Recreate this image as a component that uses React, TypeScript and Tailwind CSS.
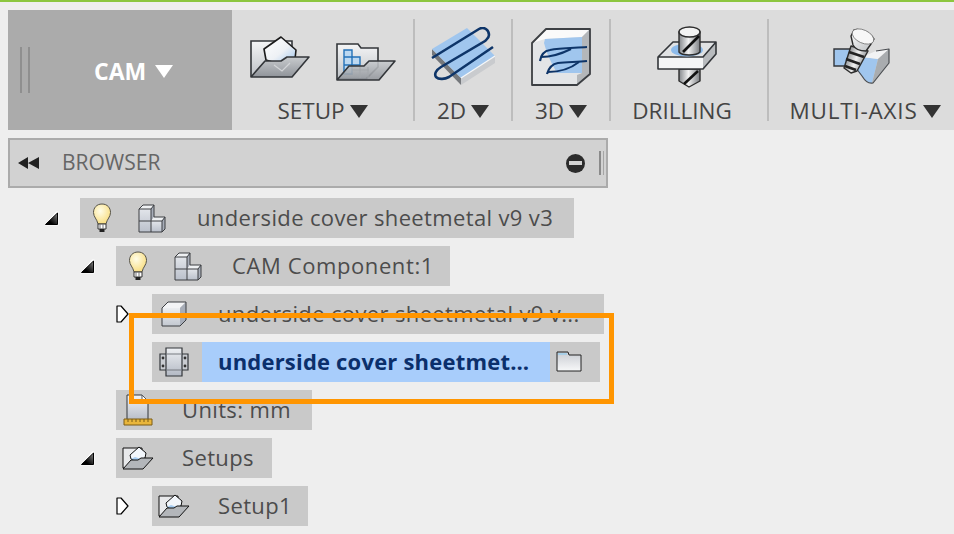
import React from 'react';

const font = { fontFamily: '"Open Sans", "Noto Sans", sans-serif' };

const Caret = ({ className = 'fill-[#333]' }: { className?: string }) => (
  <svg width="18" height="13" viewBox="0 0 18 13" className={className}>
    <path d="M0 0H18L9 13Z" />
  </svg>
);

const SetupIcon = () => (
  <svg width="60" height="43" viewBox="0 0 60 43">
    <defs>
      <linearGradient id="sf" x1="0" y1="0" x2="0" y2="1">
        <stop offset="0" stopColor="#f4f5f6" />
        <stop offset="1" stopColor="#bfc3c8" />
      </linearGradient>
      <linearGradient id="sb" x1="0" y1="0" x2="1" y2="1">
        <stop offset="0" stopColor="#ffffff" />
        <stop offset="0.55" stopColor="#eef1f5" />
        <stop offset="1" stopColor="#9cc4ee" />
      </linearGradient>
      <linearGradient id="sl" x1="0" y1="0" x2="0" y2="1">
        <stop offset="0" stopColor="#c8cbce" />
        <stop offset="1" stopColor="#90949a" />
      </linearGradient>
    </defs>
    <path d="M1 5H42V22L30 40H1Z" fill="url(#sf)" stroke="#33363a" strokeWidth="1.6" />
    <path d="M14 13L31 1L46 14L45 23L29 28L16 24Z" fill="url(#sb)" stroke="#1c1c1c" strokeWidth="1.6" strokeLinejoin="round" />
    <path d="M1 41L15 25H31L37 21H59L42 41Z" fill="url(#sl)" stroke="#33363a" strokeWidth="1.6" strokeLinejoin="round" />
    <path d="M24 29L32 35L40 27" fill="none" stroke="#d2d4d7" strokeWidth="1.2" />
  </svg>
);

const SetupGridIcon = () => (
  <svg width="60" height="38" viewBox="0 0 60 38">
    <path d="M1 1H22L25 5H42V24L30 36H1Z" fill="url(#sf)" stroke="#33363a" strokeWidth="1.6" />
    <path d="M8 7H16V14H24V22H16V31H8Z" fill="#bcd8f1" stroke="#2472b8" strokeWidth="1.4" />
    <path d="M8 14H16V22M8 22H16" fill="none" stroke="#2472b8" strokeWidth="1.4" />
    <path d="M1 37L13 23H28L33 18H59L43 37Z" fill="url(#sl)" fillOpacity="0.88" stroke="#33363a" strokeWidth="1.6" strokeLinejoin="round" />
    <path d="M16 27H33M24 24V35M32 24V35" stroke="#a3a7ab" strokeWidth="1" />
  </svg>
);

const TwoDIcon = () => (
  <svg width="64" height="60" viewBox="7 7 64 60">
    <path d="M8 29L37 58V65L8 35Z" fill="#75787c" />
    <path d="M37 58L71 36V43L37 65Z" fill="#c9cbce" />
    <path d="M8 29L43 8L71 36L37 58Z" fill="#a0c6ee" />
    <path d="M37 58L71 36" stroke="#f6f7f8" strokeWidth="1.2" />
    <path d="M8 38L55 9C60 6 65 10 65 15C65 18 63 19 61 21L17 47C12 50 10 54 12 57C15 60 21 59 25 57L69 27" fill="none" stroke="#0e3569" strokeWidth="2.6" />
  </svg>
);

const ThreeDIcon = () => (
  <svg width="62" height="60" viewBox="106 6 62 60">
    <path d="M108 22L122 8H166V53L153 64H108Z" fill="#e3e5e7" />
    <path d="M122 8H166L158 16L121 18L108 22Z" fill="#fafafa" />
    <path d="M158 16L166 8V53L153 64V54L158 52Z" fill="#b4b7ba" />
    <path d="M121 18L158 16V52H133L128 43L123 32L120 22Z" fill="#a0c6ee" />
    <path d="M108 22L122 8H166V53L153 64H108Z" fill="none" stroke="#3c3f43" strokeWidth="1.8" strokeLinejoin="round" />
    <path d="M116 40C117 33 120 30 126 29C136 27 150 27 163 26" fill="none" stroke="#0e3569" strokeWidth="2.2" />
    <path d="M117 36C126 36 137 33 147 28" fill="none" stroke="#0e3569" strokeWidth="2" />
    <path d="M123 53C125 46 128 43 134 42C144 41 154 41 163 40" fill="none" stroke="#0e3569" strokeWidth="2.2" />
    <path d="M124 51C134 51 146 48 155 41" fill="none" stroke="#0e3569" strokeWidth="2" />
  </svg>
);

const DrillIcon = () => (
  <svg width="62" height="64" viewBox="8 6 62 64">
    <defs>
      <linearGradient id="dr" x1="0" y1="0" x2="1" y2="0">
        <stop offset="0" stopColor="#85888c" />
        <stop offset="0.45" stopColor="#f2f2f2" />
        <stop offset="1" stopColor="#7b7e82" />
      </linearGradient>
    </defs>
    <path d="M31 50H52V62L41 68L31 62Z" fill="url(#dr)" stroke="#2c2c2c" strokeWidth="1.4" strokeLinejoin="round" />
    <path d="M36 65L50 52" stroke="#111" strokeWidth="2.6" />
    <path d="M10 38L25 23H68L55 38Z" fill="#e0e2e4" />
    <path d="M10 38H55V50H10Z" fill="#f4f5f6" />
    <path d="M55 38L68 23V35L55 50Z" fill="#b8bbbe" />
    <path d="M10 38L25 23H68V35L55 50H10Z M10 38H55L68 23" fill="none" stroke="#33363a" strokeWidth="1.6" strokeLinejoin="round" />
    <ellipse cx="39" cy="31" rx="16" ry="6.5" fill="#8dbbeb" />
    <path d="M31 13V33C34 37 48 37 52 33V13Z" fill="url(#dr)" stroke="#2c2c2c" strokeWidth="1.4" />
    <ellipse cx="41.5" cy="13" rx="10.5" ry="5" fill="#f3f3f3" stroke="#2c2c2c" strokeWidth="1.4" />
    <path d="M35 33L51 17" stroke="#111" strokeWidth="2.6" />
  </svg>
);

const MultiAxisIcon = () => (
  <svg width="60" height="58" viewBox="6 7 60 58">
    <defs>
      <linearGradient id="mx" x1="0" y1="0.3" x2="1" y2="0.7">
        <stop offset="0" stopColor="#707377" />
        <stop offset="0.5" stopColor="#f0f0f0" />
        <stop offset="1" stopColor="#6b6e72" />
      </linearGradient>
      <linearGradient id="mh" x1="0" y1="0" x2="1" y2="1">
        <stop offset="0" stopColor="#ffffff" />
        <stop offset="1" stopColor="#b9bcbf" />
      </linearGradient>
    </defs>
    <path d="M8 28H26L22 45H8Z" fill="#a0c6ee" stroke="#33363a" strokeWidth="1.4" />
    <path d="M36 36L52 38L46 62C40 62 35 54 30 48Z" fill="#a0c6ee" />
    <path d="M36 36L50 30L63 28L52 38Z" fill="#f2f3f4" />
    <path d="M52 38L63 28V42L47 62H46Z" fill="#a9acaf" />
    <path d="M50 30L63 28V42L47 62C43 63 39 60 36 55L30 47" fill="none" stroke="#4a4d51" strokeWidth="1.2" strokeLinejoin="round" />
    <path d="M25 25L42 30L31 50L25 52L18 47Z" fill="url(#mx)" stroke="#2c2c2c" strokeWidth="1.4" strokeLinejoin="round" />
    <path d="M23 31L38 36M20 38L34 43M19 45L30 49" stroke="#222" strokeWidth="2.6" />
    <path d="M25 15L28 9C33 7 44 11 48 18L45 23L40 30C34 30 29 28 27 24Z" fill="url(#mh)" stroke="#2c2c2c" strokeWidth="1.4" strokeLinejoin="round" />
    <ellipse cx="37" cy="15.5" rx="11.5" ry="6.5" transform="rotate(25 37 15.5)" fill="#f7f7f7" stroke="#777" strokeWidth="0.8" />
  </svg>
);

const Bulb = () => (
  <svg width="20" height="30" viewBox="0 0 20 30">
    <defs>
      <radialGradient id="bu" cx="0.4" cy="0.35" r="0.7">
        <stop offset="0" stopColor="#fffde8" />
        <stop offset="1" stopColor="#f8dc7c" />
      </radialGradient>
    </defs>
    <path d="M10 1C4.5 1 1.5 5 1.5 9.5C1.5 14 5 16 6 21H14C15 16 18.5 14 18.5 9.5C18.5 5 15.5 1 10 1Z" fill="url(#bu)" stroke="#55534a" strokeWidth="1" />
    <path d="M6 21H14V26H6Z" fill="#fff" stroke="#333" strokeWidth="1" />
    <path d="M8 21V26M11 21V26" stroke="#777" strokeWidth="1" />
    <path d="M7.5 26H12.5V29H7.5Z" fill="#222" />
  </svg>
);

const PartsIcon = () => (
  <svg width="28" height="29" viewBox="0 0 28 29">
    <defs>
      <linearGradient id="pa" x1="0" y1="0" x2="0" y2="1">
        <stop offset="0" stopColor="#e2e5ea" />
        <stop offset="1" stopColor="#bac0cb" />
      </linearGradient>
    </defs>
    <path d="M1 5H13V28H1Z" fill="url(#pa)" />
    <path d="M1 5L5 1H16L13 5Z" fill="#eff1f3" />
    <path d="M13 5L16 1V13L13 17Z" fill="#a7adb8" />
    <path d="M13 17H24V28H13Z" fill="url(#pa)" />
    <path d="M13 17L16 13H27L24 17Z" fill="#eff1f3" />
    <path d="M24 17L27 13V25L24 28Z" fill="#a7adb8" />
    <path d="M1 5L5 1H16V13H27V25L24 28H1Z M1 17H13M13 5V28M1 5H13L16 1M13 17H24V28M24 17L27 13" fill="none" stroke="#3c3f43" strokeWidth="1" strokeLinejoin="round" />
  </svg>
);

const CubeIcon = () => (
  <svg width="26" height="26" viewBox="0 0 26 26">
    <defs>
      <linearGradient id="cu" x1="0" y1="0" x2="0" y2="1">
        <stop offset="0" stopColor="#eceef1" />
        <stop offset="1" stopColor="#c3c8d0" />
      </linearGradient>
    </defs>
    <path d="M1 7H19V25H1Z" fill="url(#cu)" />
    <path d="M1 7L7 1H25L19 7Z" fill="#f3f4f6" />
    <path d="M19 7L25 1V19L19 25Z" fill="#a7adb8" />
    <path d="M1 7L7 1H25V19L19 25H1Z" fill="none" stroke="#3c3f43" strokeWidth="1" strokeLinejoin="round" />
  </svg>
);

const StockIcon = () => (
  <svg width="30" height="30" viewBox="0 0 30 30">
    <defs>
      <linearGradient id="st" x1="0" y1="0" x2="0" y2="1">
        <stop offset="0" stopColor="#eef0f3" />
        <stop offset="1" stopColor="#b3b9c4" />
      </linearGradient>
    </defs>
    <path d="M1 7H29V23H1Z" fill="#c9ccd1" stroke="#33363a" strokeWidth="1.2" />
    <path d="M7 1H23V29H7Z" fill="url(#st)" stroke="#33363a" strokeWidth="1.2" />
    <path d="M7 7H23M7 23H23" stroke="#777b80" strokeWidth="1" />
    <circle cx="4" cy="11" r="1.4" fill="#333" />
    <circle cx="4" cy="19" r="1.4" fill="#333" />
    <circle cx="26" cy="11" r="1.4" fill="#333" />
    <circle cx="26" cy="19" r="1.4" fill="#333" />
  </svg>
);

const FolderIcon = () => (
  <svg width="26" height="22" viewBox="0 0 26 22">
    <defs>
      <linearGradient id="fo" x1="0" y1="0" x2="0" y2="1">
        <stop offset="0" stopColor="#c9ccd2" />
        <stop offset="1" stopColor="#f7f8f9" />
      </linearGradient>
    </defs>
    <path d="M1 1H12L13 4H25V20H1Z" fill="url(#fo)" stroke="#222" strokeWidth="1" />
    <path d="M2 2H11V4H2Z" fill="#a9d0e8" />
  </svg>
);

const UnitsIcon = () => (
  <svg width="30" height="32" viewBox="0 0 30 32">
    <defs>
      <linearGradient id="un" x1="0" y1="0" x2="0" y2="1">
        <stop offset="0" stopColor="#f2f3f5" />
        <stop offset="1" stopColor="#b7bdc8" />
      </linearGradient>
    </defs>
    <path d="M4 1H19L25 7V26H4Z" fill="url(#un)" stroke="#33363a" strokeWidth="1" />
    <path d="M19 1V7H25Z" fill="#fff" stroke="#55585c" strokeWidth="1" />
    <path d="M1 25H29V31H1Z" fill="#e9b63c" stroke="#7c5c14" strokeWidth="1" />
    <path d="M5 25V28M9 25V28M13 25V28M17 25V28M21 25V28M25 25V28" stroke="#7a5c16" strokeWidth="1" />
  </svg>
);

const SmallSetupIcon = () => (
  <svg width="32" height="24" viewBox="0 0 32 24">
    <path d="M1 2H20V15L12 22H1Z" fill="#e8e9eb" stroke="#111" strokeWidth="1" />
    <path d="M8 9L17 1L24 7L23 12L15 15L9 13Z" fill="#f2f6fb" stroke="#111" strokeWidth="1" strokeLinejoin="round" />
    <path d="M9 13L15 15L19 13L13 11Z" fill="#a7cdf2" />
    <path d="M1 23L9 14H16L19 12H31L21 23Z" fill="#b3b6ba" stroke="#111" strokeWidth="1" strokeLinejoin="round" />
  </svg>
);

const TwistOpen = () => (
  <svg width="15" height="15" viewBox="0 0 15 15">
    <defs>
      <linearGradient id="tw" x1="0" y1="1" x2="1" y2="0">
        <stop offset="0.3" stopColor="#000" />
        <stop offset="1" stopColor="#8a8a8a" />
      </linearGradient>
    </defs>
    <path d="M0.5 14.5H14.5V0.5H12Z" fill="#fff" />
    <path d="M1.5 13.5H13.5V2Z" fill="url(#tw)" stroke="#000" strokeWidth="1" strokeLinejoin="round" />
  </svg>
);

const TwistClosed = () => (
  <svg width="13" height="18" viewBox="0 0 13 18">
    <path d="M1 1H5L12 9L5 17H1Z" fill="#fff" stroke="#000" strokeWidth="1.2" strokeLinejoin="round" />
  </svg>
);

const Tool = ({ width, icon, label, caret, last, labelClass = '' }: { width: string; icon: React.ReactNode; label: string; caret?: boolean; last?: boolean; labelClass?: string }) => (
  <div className={`${width} h-full py-[9px]`}>
    <div className={`flex h-full flex-col items-center justify-between ${last ? '' : 'border-r-2 border-[#bdbdbd]'}`}>
      <div className="flex h-[76px] items-center justify-center">{icon}</div>
      <div className={`flex h-[20px] items-center gap-[5px] text-[22.5px] leading-none text-[#444] ${labelClass}`}>
        {label}
        {caret && <Caret />}
      </div>
    </div>
  </div>
);

const Row = ({ className, twist, children }: { className: string; twist?: 'open' | 'closed'; children: React.ReactNode }) => (
  <div className={`flex h-10 items-center ${className}`}>
    <div className="flex w-[36px] shrink-0 items-center">
      {twist === 'open' && <TwistOpen />}
      {twist === 'closed' && <TwistClosed />}
    </div>
    {children}
  </div>
);

const Label = ({ children, className = '' }: { children: React.ReactNode; className?: string }) => (
  <span className={`block whitespace-nowrap pb-[2px] text-[22px] leading-none tracking-[0.36px] text-[#4c4c4c] ${className}`}>{children}</span>
);

export default function App() {
  return (
    <div className="relative h-[534px] w-[954px] overflow-hidden bg-[#eeeeee]" style={font}>
      <div className="h-[2px] bg-[#8cc63f]" />
      <div className="ml-2 mt-2 flex h-[120px] bg-[#dcdcdc]">
        <div className="flex h-full w-[224px] items-center bg-[#ababab] pl-[12px]">
          <div className="h-[46px] w-[10px] border-x-2 border-[#8f8f8f]" />
          <div className="ml-[64px] mt-[2px] flex items-center gap-[9px] text-[23px] font-bold leading-none text-white">
            CAM
            <Caret className="fill-white" />
          </div>
        </div>
        <Tool
          width="w-[183px]"
          label="SETUP"
          caret
          icon={
            <div className="flex items-center gap-[26px]">
              <SetupIcon />
              <div className="mt-[10px]"><SetupGridIcon /></div>
            </div>
          }
        />
        <Tool width="w-[98px]" label="2D" caret icon={<TwoDIcon />} />
        <Tool width="w-[98px]" label="3D" caret icon={<ThreeDIcon />} />
        <Tool width="w-[158px]" label="DRILLING" labelClass="mr-[14px]" icon={<div className="ml-[-4px]"><DrillIcon /></div>} />
        <Tool width="w-[185px]" label="MULTI-AXIS" caret last labelClass="ml-[7px] gap-[3px] tracking-[0.8px]" icon={<MultiAxisIcon />} />
      </div>

      <div className="ml-2 mt-2 flex h-[50px] w-[600px] items-center border-2 border-[#ababab] bg-[#d2d2d2] pl-[8px] pr-[2px]">
        <svg width="22" height="14" viewBox="0 0 22 14" className="fill-[#222]">
          <path d="M0 7L10 1V13ZM10 7L21 1V13Z" />
        </svg>
        <span className="ml-[22px] text-[21px] text-[#666]">BROWSER</span>
        <div className="ml-auto flex items-center gap-[14px]">
          <div className="flex h-[19px] w-[19px] items-center justify-center rounded-full bg-[#2b2b2b]">
            <div className="h-[4px] w-[13px] bg-[#d2d2d2]" />
          </div>
          <div className="h-[24px] w-[5px] border-l-2 border-r border-l-[#8a8a8a] border-r-[#a5a5a5]" />
        </div>
      </div>

      <div className="mt-[10px] flex flex-col gap-2">
        <Row className="ml-[44px]" twist="open">
          <div className="flex h-full w-[494px] items-center bg-[#c9c9c9] pl-[12px]">
            <Bulb />
            <div className="ml-[26px]"><PartsIcon /></div>
            <Label className="ml-[31px]">underside cover sheetmetal v9 v3</Label>
          </div>
        </Row>
        <Row className="ml-[80px]" twist="open">
          <div className="flex h-full w-[334px] items-center bg-[#c9c9c9] pl-[12px]">
            <Bulb />
            <div className="ml-[26px]"><PartsIcon /></div>
            <Label className="ml-[30px] !tracking-[0.6px]">CAM Component:1</Label>
          </div>
        </Row>
        <Row className="ml-[116px]" twist="closed">
          <div className="flex h-full w-[452px] items-center bg-[#c9c9c9] pl-[9px]">
            <CubeIcon />
            <Label className="ml-[31px]">underside cover sheetmetal v9 v...</Label>
          </div>
        </Row>
        <Row className="ml-[116px]">
          <div className="flex h-full w-[448px] items-center bg-[#c9c9c9]">
            <div className="flex w-[50px] pl-[7px]"><StockIcon /></div>
            <div className="flex h-full w-[348px] items-center bg-[#a8cdfb] pl-[16px]">
              <Label className="font-bold !tracking-[0.2px] !text-[#0b2f6b]">underside cover sheetmet…</Label>
            </div>
            <div className="ml-[6px]"><FolderIcon /></div>
          </div>
        </Row>
        <Row className="ml-[80px]">
          <div className="flex h-full w-[196px] items-center bg-[#c9c9c9] pl-[7px]">
            <UnitsIcon />
            <Label className="ml-[29px]">Units: mm</Label>
          </div>
        </Row>
        <Row className="ml-[80px]" twist="open">
          <div className="flex h-full w-[156px] items-center bg-[#c9c9c9] pl-[6px]">
            <SmallSetupIcon />
            <Label className="ml-[28px]">Setups</Label>
          </div>
        </Row>
        <Row className="ml-[116px]" twist="closed">
          <div className="flex h-full w-[156px] items-center bg-[#c9c9c9] pl-[6px]">
            <SmallSetupIcon />
            <Label className="ml-[28px]">Setup1</Label>
          </div>
        </Row>
      </div>

      <div className="absolute left-[129px] top-[313px] h-[91px] w-[485px] border-[5px] border-[#ff9500]" />
    </div>
  );
}
